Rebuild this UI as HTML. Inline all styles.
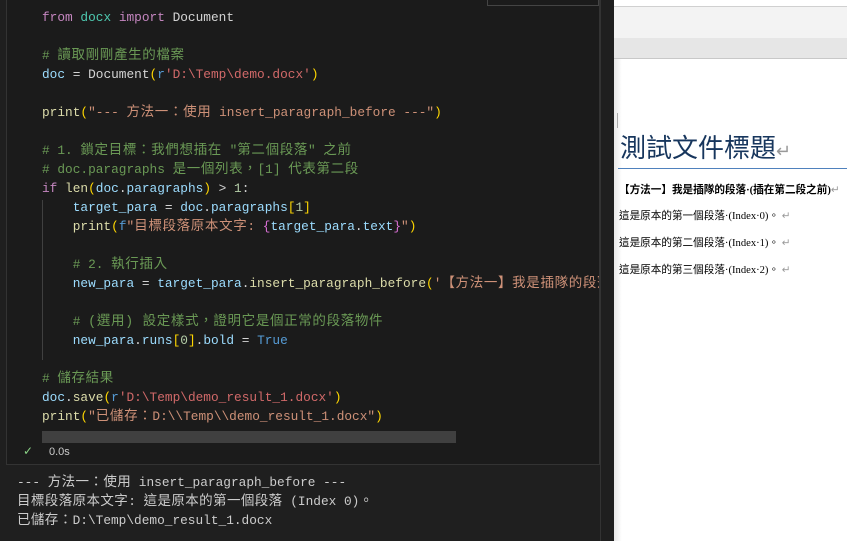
<!DOCTYPE html>
<html><head><meta charset="utf-8"><style>
body{margin:0;width:847px;height:541px;overflow:hidden;background:#1f1f1f;position:relative;font-family:"Liberation Mono","Noto Sans CJK TC",monospace}
i{font-style:normal;font-size:13.5px;letter-spacing:0.65px}
.l{position:absolute;left:42px;font-size:12.8px;white-space:pre;line-height:19px;color:#d4d4d4}
.k{color:#c586c0}.m{color:#4ec9b0}.v{color:#9cdcfe}.f{color:#dcdcaa}.s{color:#ce9178}.c{color:#6a9955}.p{color:#ffd700}.b{color:#da70d6}.n{color:#b5cea8}.t{color:#569cd6}.r{color:#d16969}
.o{position:absolute;left:17px;font-size:12.8px;white-space:pre;color:#cccccc;line-height:19px}
.o i{font-size:13.5px;letter-spacing:0.4px}
.d{position:absolute;font-family:"Liberation Serif","Noto Sans CJK TC",serif;font-size:10.6px;color:#000;white-space:pre}
</style></head><body>
<div style="position:absolute;left:6px;top:-1px;width:592px;height:464px;border:1px solid #333;background:#1b1b1b"></div>
<div style="position:absolute;left:487px;top:-1px;width:110px;height:5px;border:1px solid #444"></div>
<div style="position:absolute;left:42px;top:200px;width:1px;height:160px;background:#404040"></div>
<div class="l" style="top:8px"><span class="k">from</span> <span class="m">docx</span> <span class="k">import</span> Document</div>
<div class="l c" style="top:46px"># <i>讀取剛剛產生的檔案</i></div>
<div class="l" style="top:65px"><span class="v">doc</span> = Document<span class="p">(</span><span class="t">r</span><span class="r">'D:\Temp\demo.docx'</span><span class="p">)</span></div>
<div class="l" style="top:103px"><span class="f">print</span><span class="p">(</span><span class="s">"--- <i>方法一：使用</i> insert_paragraph_before ---"</span><span class="p">)</span></div>
<div class="l c" style="top:141px"># 1. <i>鎖定目標：我們想插在</i> "<i>第二個段落</i>" <i>之前</i></div>
<div class="l c" style="top:160px"># doc.paragraphs <i>是一個列表，</i>[1] <i>代表第二段</i></div>
<div class="l" style="top:179px"><span class="k">if</span> <span class="f">len</span><span class="p">(</span><span class="v">doc</span>.<span class="v">paragraphs</span><span class="p">)</span> &gt; <span class="n">1</span>:</div>
<div class="l" style="top:198px">    <span class="v">target_para</span> = <span class="v">doc</span>.<span class="v">paragraphs</span><span class="p">[</span><span class="n">1</span><span class="p">]</span></div>
<div class="l" style="top:217px">    <span class="f">print</span><span class="p">(</span><span class="t">f</span><span class="s">"<i>目標段落原本文字</i>: </span><span class="b">{</span><span class="v">target_para</span>.<span class="v">text</span><span class="b">}</span><span class="s">"</span><span class="p">)</span></div>
<div class="l c" style="top:255px">    # 2. <i>執行插入</i></div>
<div class="l" style="top:274px;width:557px;overflow:hidden">    <span class="v">new_para</span> = <span class="v">target_para</span>.<span class="f">insert_paragraph_before</span><span class="p">(</span><span class="s">'<i>【方法一】我是插隊的段落</i></span></div>
<div class="l c" style="top:312px">    # <i>(選用) 設定樣式，證明它是個正常的段落物件</i></div>
<div class="l" style="top:331px">    <span class="v">new_para</span>.<span class="v">runs</span><span class="p">[</span><span class="n">0</span><span class="p">]</span>.<span class="v">bold</span> = <span class="t">True</span></div>
<div class="l c" style="top:369px"># <i>儲存結果</i></div>
<div class="l" style="top:388px"><span class="v">doc</span>.<span class="f">save</span><span class="p">(</span><span class="t">r</span><span class="r">'D:\Temp\demo_result_1.docx'</span><span class="p">)</span></div>
<div class="l" style="top:407px"><span class="f">print</span><span class="p">(</span><span class="s">"<i>已儲存：</i>D:\\Temp\\demo_result_1.docx"</span><span class="p">)</span></div>
<div style="position:absolute;left:42px;top:431px;width:414px;height:12px;background:#404040"></div>
<div style="position:absolute;left:23px;top:444px;color:#89d185;font-family:'Liberation Sans',sans-serif;font-size:12px">✓</div>
<div style="position:absolute;left:49px;top:446px;color:#ccc;font-family:'Liberation Sans',sans-serif;font-size:11px">0.0s</div>
<div class="o" style="top:473px">--- <i>方法一：使用</i> insert_paragraph_before ---</div>
<div class="o" style="top:492px"><i>目標段落原本文字</i>: <i>這是原本的第一個段落</i> (Index 0)<i>。</i></div>
<div class="o" style="top:511px"><i>已儲存：</i>D:\Temp\demo_result_1.docx</div>
<div style="position:absolute;left:600px;top:0;width:14px;height:541px;background:#1f1f1f;border-left:1px solid #333"></div>
<div style="position:absolute;left:614px;top:0;width:233px;height:541px;background:#fff"></div>
<div style="position:absolute;left:614px;top:6px;width:233px;height:32px;background:#f3f3f3;border-top:1px solid #d0d0d0"></div>
<div style="position:absolute;left:614px;top:38px;width:233px;height:20px;background:#e6e6e6;border-bottom:1px solid #c8c8c8"></div>
<div style="position:absolute;left:614px;top:59px;width:8px;height:482px;background:linear-gradient(90deg,#e8e8e8,#fff)"></div>
<div style="position:absolute;left:617px;top:113px;width:1px;height:15px;background:#aaa"></div>
<div style="position:absolute;left:620px;top:128px;font-family:'Liberation Sans','Noto Sans CJK TC',sans-serif;font-size:26px;color:#17365d;white-space:pre">測試文件標題<span style="color:#999;font-size:18px">↵</span></div>
<div style="position:absolute;left:618px;top:168px;width:229px;height:1px;background:#4f81bd"></div>
<div class="d" style="left:619px;top:182px;font-weight:bold">【方法一】我是插隊的段落·(插在第二段之前)<span style="color:#999;font-weight:normal">↵</span></div>
<div class="d" style="left:619px;top:208px">這是原本的第一個段落·(Index·0)。 <span style="color:#999">↵</span></div>
<div class="d" style="left:619px;top:235px">這是原本的第二個段落·(Index·1)。 <span style="color:#999">↵</span></div>
<div class="d" style="left:619px;top:262px">這是原本的第三個段落·(Index·2)。 <span style="color:#999">↵</span></div>
</body></html>
